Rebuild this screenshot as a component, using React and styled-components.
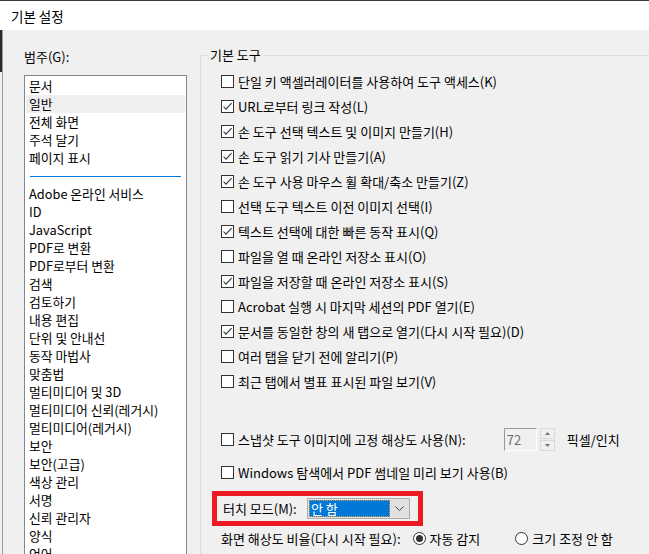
import React from "react";
import styled, { createGlobalStyle } from "styled-components";

const GlobalStyle = createGlobalStyle`
  html, body {
    margin: 0;
    padding: 0;
    background: #f0f0f0;
    overflow: hidden;
  }
  * { box-sizing: border-box; }
`;

const FONT = `"Noto Sans CJK KR", "Noto Sans", sans-serif`;

const Window = styled.div`
  width: 649px;
  height: 554px;
  display: flex;
  flex-direction: column;
  font-family: ${FONT};
  font-size: 13px;
  color: #000;
  overflow: hidden;
`;

const TitleBar = styled.div`
  height: 30px;
  flex: none;
  background: #fff;
  border-top: 1px solid #3a3a3a;
  padding-left: 11px;
  display: flex;
  align-items: center;
  font-size: 13.5px;
`;

const Body = styled.div`
  flex: 1;
  display: flex;
  min-height: 0;
`;

const EdgeStrip = styled.div`
  width: 3px;
  flex: none;
  background: linear-gradient(#2b2b2b 0, #2b2b2b 42px, #f0f0f0 42px);
  border-right: 1px solid #9a9a9a;
`;

const LeftPane = styled.div`
  width: 185px;
  flex: none;
  padding-left: 21px;
  display: flex;
  flex-direction: column;
`;

const Label = styled.div`
  height: 18px;
  line-height: 18px;
  margin-top: ${(p) => p.$top || 0}px;
  white-space: nowrap;
`;

const ListBox = styled.div`
  margin-top: 9px;
  width: 163px;
  flex: 1;
  background: #fff;
  border: 1px solid #828790;
  border-bottom: none;
  padding: 1px 1px 0;
  display: flex;
  flex-direction: column;
  font-size: 12.8px;
`;

const ListItem = styled.div`
  height: 18px;
  flex: none;
  line-height: 18px;
  padding-left: 3px;
  white-space: nowrap;
  background: ${(p) => (p.$selected ? "#efefef" : "transparent")};
`;

const Separator = styled.div`
  height: 18px;
  flex: none;
  display: flex;
  align-items: center;
  padding: 0 4px;
  &::after {
    content: "";
    flex: 1;
    height: 1px;
    background: #0078d7;
  }
`;

const RightPane = styled.div`
  flex: 1;
  padding-left: 12px;
  padding-top: 17px;
  display: flex;
  flex-direction: column;
`;

const Group = styled.fieldset`
  margin: 0;
  padding: 6px 0 0 20px;
  border: none;
  border-top: 1px solid #dcdcdc;
  border-left: 1px solid #dcdcdc;
  flex: 1;
  min-width: 0;
  display: flex;
  flex-direction: column;
`;

const Legend = styled.legend`
  padding: 0 3px;
  margin-left: -14px;
  line-height: 16px;
`;

const Row = styled.div`
  height: 25px;
  flex: none;
  display: flex;
  align-items: center;
  gap: 4px;
  margin-top: ${(p) => p.$top || 0}px;
  white-space: nowrap;
`;

const Spacer = styled.span`
  width: ${(p) => p.$w}px;
  flex: none;
`;

const Box = styled.span`
  width: 13px;
  height: 13px;
  flex: none;
  border: 1px solid #333;
  background: #fff;
  display: inline-flex;
  align-items: center;
  justify-content: center;
`;

const Radio = styled.span`
  width: 13px;
  height: 13px;
  flex: none;
  border: 1px solid #333;
  border-radius: 50%;
  background: #fff;
  display: inline-flex;
  align-items: center;
  justify-content: center;
  &::after {
    content: "";
    width: 7px;
    height: 7px;
    border-radius: 50%;
    background: ${(p) => (p.$on ? "#333" : "transparent")};
  }
`;

const NumInput = styled.div`
  width: 33px;
  height: 23px;
  flex: none;
  border: 1px solid;
  border-color: #9a9a9a #fff #fff #9a9a9a;
  background: #f0f0f0;
  color: #6d6d6d;
  padding-left: 2px;
  line-height: 21px;
  font-size: 13px;
`;

const Spinner = styled.div`
  width: 15px;
  height: 23px;
  flex: none;
  margin-left: -1px;
  display: flex;
  flex-direction: column;
  gap: 1px;
`;

const SpinBtn = styled.div`
  flex: 1;
  border: 1px solid #d9d9d9;
  background: #f0f0f0;
  display: flex;
  align-items: center;
  justify-content: center;
`;

const Highlight = styled.div`
  margin-top: 6px;
  margin-left: -9px;
  width: 211px;
  height: 35px;
  flex: none;
  border: 5px solid #ed1c24;
  display: flex;
  align-items: center;
  padding-left: 6px;
  white-space: nowrap;
`;

const Combo = styled.div`
  margin-left: auto;
  margin-right: 8px;
  width: 103px;
  height: 21px;
  flex: none;
  border: 1px solid #adadad;
  background: #e1e1e1;
  display: flex;
  align-items: center;
  padding: 1px;
`;

const ComboValue = styled.div`
  width: 81px;
  height: 17px;
  background: #0078d7;
  color: #fff;
  outline: 1px dotted #e8a050;
  outline-offset: -1px;
  padding-left: 2px;
  line-height: 17px;
`;

const ComboArrow = styled.div`
  flex: 1;
  display: flex;
  align-items: center;
  justify-content: center;
`;

const Check = ({ on }) => (
  <Box>
    {on && (
      <svg width="11" height="11" viewBox="0 0 11 11">
        <path d="M1.5 5.5 L4 8.2 L9.6 2.2" fill="none" stroke="#333" strokeWidth="1.1" />
      </svg>
    )}
  </Box>
);

const topItems = ["문서", "일반", "전체 화면", "주석 달기", "페이지 표시"];
const moreItems = [
  "Adobe 온라인 서비스",
  "ID",
  "JavaScript",
  "PDF로 변환",
  "PDF로부터 변환",
  "검색",
  "검토하기",
  "내용 편집",
  "단위 및 안내선",
  "동작 마법사",
  "맞춤법",
  "멀티미디어 및 3D",
  "멀티미디어 신뢰(레거시)",
  "멀티미디어(레거시)",
  "보안",
  "보안(고급)",
  "색상 관리",
  "서명",
  "신뢰 관리자",
  "양식",
  "언어",
];

const options = [
  [false, "단일 키 액셀러레이터를 사용하여 도구 액세스(K)"],
  [true, "URL로부터 링크 작성(L)"],
  [true, "손 도구 선택 텍스트 및 이미지 만들기(H)"],
  [true, "손 도구 읽기 기사 만들기(A)"],
  [true, "손 도구 사용 마우스 휠 확대/축소 만들기(Z)"],
  [false, "선택 도구 텍스트 이전 이미지 선택(I)"],
  [true, "텍스트 선택에 대한 빠른 동작 표시(Q)"],
  [false, "파일을 열 때 온라인 저장소 표시(O)"],
  [true, "파일을 저장할 때 온라인 저장소 표시(S)"],
  [false, "Acrobat 실행 시 마지막 세션의 PDF 열기(E)"],
  [true, "문서를 동일한 창의 새 탭으로 열기(다시 시작 필요)(D)"],
  [false, "여러 탭을 닫기 전에 알리기(P)"],
  [false, "최근 탭에서 별표 표시된 파일 보기(V)"],
];

export default function App() {
  return (
    <>
      <GlobalStyle />
      <Window>
        <TitleBar>기본 설정</TitleBar>
        <Body>
          <EdgeStrip />
          <LeftPane>
            <Label $top={18}>범주(G):</Label>
            <ListBox>
              {topItems.map((t) => (
                <ListItem key={t} $selected={t === "일반"}>{t}</ListItem>
              ))}
              <Separator />
              {moreItems.map((t) => (
                <ListItem key={t}>{t}</ListItem>
              ))}
            </ListBox>
          </LeftPane>
          <RightPane>
            <Group>
              <Legend>기본 도구</Legend>
              {options.map(([on, text]) => (
                <Row key={text}>
                  <Check on={on} />
                  {text}
                </Row>
              ))}
              <Row $top={33}>
                <Check on={false} />
                스냅샷 도구 이미지에 고정 해상도 사용(N):
                <Spacer $w={30} />
                <NumInput>72</NumInput>
                <Spinner>
                  <SpinBtn>
                    <svg width="5" height="3" viewBox="0 0 5 3"><path d="M0 3 L2.5 0 L5 3 Z" fill="#777" /></svg>
                  </SpinBtn>
                  <SpinBtn>
                    <svg width="5" height="3" viewBox="0 0 5 3"><path d="M0 0 L2.5 3 L5 0 Z" fill="#777" /></svg>
                  </SpinBtn>
                </Spinner>
                <Spacer $w={4} />
                픽셀/인치
              </Row>
              <Row $top={8}>
                <Check on={false} />
                Windows 탐색에서 PDF 썸네일 미리 보기 사용(B)
              </Row>
              <Highlight>
                터치 모드(M):
                <Combo>
                  <ComboValue>안 함</ComboValue>
                  <ComboArrow>
                    <svg width="9" height="5" viewBox="0 0 9 5">
                      <path d="M0.5 0.5 L4.5 4.5 L8.5 0.5" fill="none" stroke="#444" strokeWidth="1" />
                    </svg>
                  </ComboArrow>
                </Combo>
              </Highlight>
              <Row>
                화면 해상도 비율(다시 시작 필요):
                <Spacer $w={4} />
                <Radio $on />
                자동 감지
                <Spacer $w={27} />
                <Radio />
                크기 조정 안 함
              </Row>
            </Group>
          </RightPane>
        </Body>
      </Window>
    </>
  );
}
